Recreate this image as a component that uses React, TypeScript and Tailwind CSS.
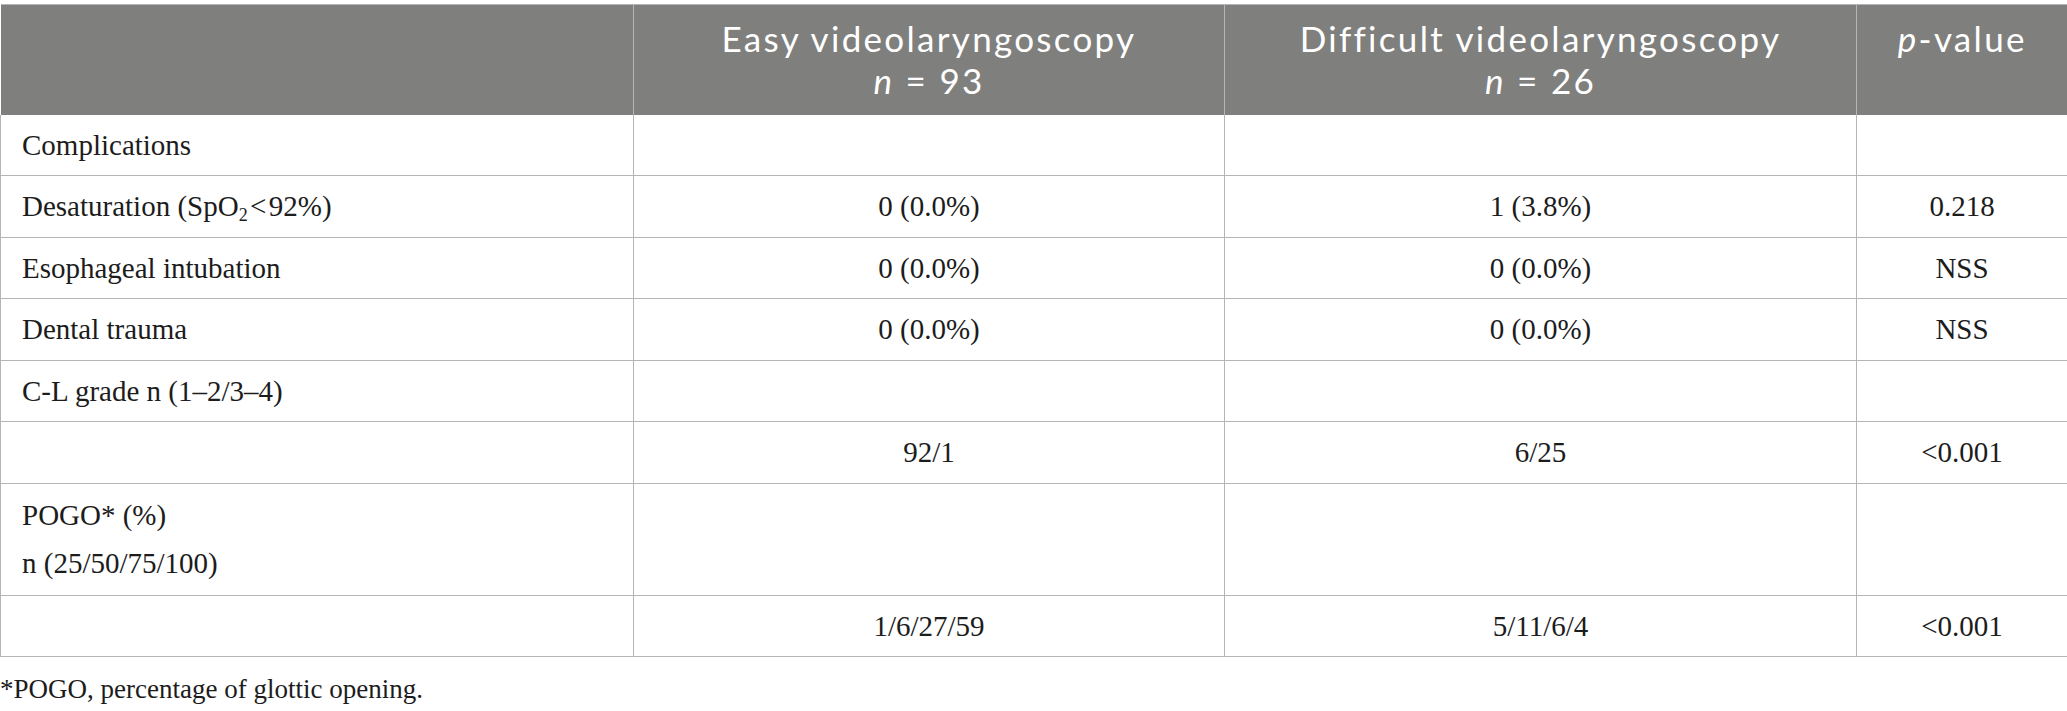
import React from "react";

const serif = "font-['Liberation_Serif',_'Times_New_Roman',_serif]";

type Row = {
  label: React.ReactNode;
  easy?: string;
  hard?: string;
  p?: string;
  tall?: boolean;
};

const rows: Row[] = [
  { label: "Complications" },
  {
    label: (
      <>
        Desaturation (SpO<sub className="text-[0.62em] align-baseline relative top-[0.3em]">2</sub>{"\u200A<\u200A"}92%)
      </>
    ),
    easy: "0 (0.0%)",
    hard: "1 (3.8%)",
    p: "0.218",
  },
  { label: "Esophageal intubation", easy: "0 (0.0%)", hard: "0 (0.0%)", p: "NSS" },
  { label: "Dental trauma", easy: "0 (0.0%)", hard: "0 (0.0%)", p: "NSS" },
  { label: "C-L grade n (1–2/3–4)" },
  { label: "", easy: "92/1", hard: "6/25", p: "<0.001" },
  {
    label: (
      <>
        POGO* (%)
        <br />
        n (25/50/75/100)
      </>
    ),
    tall: true,
  },
  { label: "", easy: "1/6/27/59", hard: "5/11/6/4", p: "<0.001" },
];

function HeadCell({ children, last }: { children: React.ReactNode; last?: boolean }) {
  return (
    <th
      className={`align-top text-center font-normal text-white pt-[12px] px-3 border-[#b5b5b5] ${
        last ? "" : "border-r"
      }`}
    >
      {children}
    </th>
  );
}

export default function App() {
  return (
    <div className="w-[2067px] h-[711px] bg-white pt-[4px]">
      <table className="table-fixed border-collapse w-[2067px]">
        <colgroup>
          <col className="w-[633px]" />
          <col className="w-[591px]" />
          <col className="w-[632px]" />
          <col className="w-[211px]" />
        </colgroup>
        <thead>
          <tr className="bg-[#7f807e] h-[110px] border-t border-[#b5b5b5] font-['Lato',_'Open_Sans',_sans-serif] text-[35px] leading-[42px] tracking-[2.3px]">
            <HeadCell>{""}</HeadCell>
            <HeadCell>
              Easy videolaryngoscopy
              <br />
              <i>n</i> = 93
            </HeadCell>
            <HeadCell>
              Difficult videolaryngoscopy
              <br />
              <i>n</i> = 26
            </HeadCell>
            <HeadCell last>
              <i>p</i>-value
            </HeadCell>
          </tr>
        </thead>
        <tbody className={`${serif} text-[29px] leading-[48.5px] text-[#1c1c1c]`}>
          {rows.map((r, i) => {
            const py = r.tall ? "py-[7px]" : "py-[6px]";
            return (
              <tr key={i} className="border-b border-[#b5b5b5]">
                <td className={`border-x border-[#b5b5b5] px-[21px] ${py} align-middle`}>
                  {r.label === "" ? "\u00A0" : r.label}
                </td>
                <td className={`border-r border-[#b5b5b5] ${py} text-center`}>{r.easy ?? ""}</td>
                <td className={`border-r border-[#b5b5b5] ${py} text-center`}>{r.hard ?? ""}</td>
                <td className={`border-r border-[#b5b5b5] ${py} text-center`}>{r.p ?? ""}</td>
              </tr>
            );
          })}
        </tbody>
      </table>
      <p className={`${serif} text-[27px] text-[#1c1c1c] mt-[14px] leading-[36px]`}>
        *POGO, percentage of glottic opening.
      </p>
    </div>
  );
}
